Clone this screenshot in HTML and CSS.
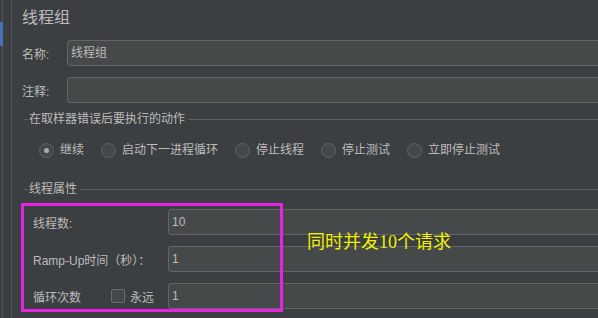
FILE: index.html
```html
<!DOCTYPE html>
<html lang="zh-CN">
<head>
<meta charset="utf-8">
<title>线程组</title>
<link rel="stylesheet" href="styles.css">
</head>
<body>
<div class="app">
  <div class="gutter">
    <div class="strip"><div class="marker"></div></div>
  </div>
  <div class="main">
    <div class="title">线程组</div>
    <div class="form">
      <div class="form-row">
        <label class="label">名称:</label>
        <div class="input">线程组</div>
      </div>
      <div class="form-row">
        <label class="label">注释:</label>
        <div class="input"></div>
      </div>
    </div>

    <div class="section sec-action">
      <div class="sec-head"><span class="sec-line-l"></span><span class="sec-title">在取样器错误后要执行的动作</span><span class="sec-line"></span></div>
      <div class="radios">
        <div class="radio-item"><span class="radio checked"></span><span>继续</span></div>
        <div class="radio-item"><span class="radio"></span><span>启动下一进程循环</span></div>
        <div class="radio-item"><span class="radio"></span><span>停止线程</span></div>
        <div class="radio-item"><span class="radio"></span><span>停止测试</span></div>
        <div class="radio-item"><span class="radio"></span><span>立即停止测试</span></div>
      </div>
    </div>

    <div class="section sec-props">
      <div class="sec-head"><span class="sec-line-l"></span><span class="sec-title">线程属性</span><span class="sec-line"></span></div>
      <div class="props">
        <div class="prop-row">
          <div class="prop-label">线程数:</div>
          <div class="input num">10</div>
        </div>
        <div class="prop-row">
          <div class="prop-label">Ramp-Up时间（秒）：</div>
          <div class="input num">1</div>
        </div>
        <div class="prop-row">
          <div class="prop-label loop"><span class="loop-text">循环次数</span><span class="checkbox"></span><span>永远</span></div>
          <div class="input num">1</div>
        </div>
      </div>
    </div>
  </div>
</div>
<div class="highlight"></div>
<div class="note">同时并发10个请求</div>
</body>
</html>
```
FILE: styles.css
```css
html, body {
  margin: 0;
  padding: 0;
  background: #3c3f41;
  overflow: hidden;
}
body {
  width: 598px;
  height: 318px;
  position: relative;
  font-family: "Liberation Sans", "Noto Sans CJK SC", sans-serif;
  font-size: 12px;
  color: #bbbbbb;
}
.app {
  display: flex;
  height: 318px;
}
.gutter {
  width: 11px;
  flex: none;
  border-right: 1px solid #515456;
}
.strip {
  width: 3px;
  height: 100%;
  box-sizing: border-box;
  padding-top: 22px;
  border-right: 1px solid #515456;
}
.marker {
  width: 3px;
  height: 24px;
  background: #4a6fb3;
}
.main {
  flex: 1;
  min-width: 0;
  padding: 8px 0 0 10px;
}
.title {
  font-size: 16px;
  line-height: 20px;
  height: 20px;
  margin-bottom: 12px;
}
.form {
  display: flex;
  flex-direction: column;
  gap: 11px;
}
.form-row {
  display: flex;
  align-items: center;
  height: 26px;
}
.label {
  width: 45px;
  flex: none;
}
.input {
  flex: 1;
  height: 26px;
  box-sizing: border-box;
  background: #45494a;
  border: 1px solid #646464;
  border-radius: 3px;
  margin-right: -8px;
  padding: 0 3px;
  line-height: 24px;
  color: #bbbbbb;
  overflow: hidden;
}
.section {
  margin-left: 2px;
}
.sec-action {
  margin-top: 10px;
}
.sec-props {
  margin-top: 25px;
}
.sec-head {
  display: flex;
  align-items: center;
  height: 12px;
}
.sec-line-l {
  width: 4px;
  height: 1px;
  background: #5c5e60;
  margin-right: 1px;
}
.sec-title {
  line-height: 12px;
  padding: 0 3px 0 0;
}
.sec-line {
  flex: 1;
  height: 1px;
  background: #5c5e60;
}
.radios {
  display: flex;
  align-items: center;
  gap: 17px;
  margin-top: 18px;
  padding-left: 15px;
  height: 15px;
}
.radio-item {
  display: flex;
  align-items: center;
  gap: 6px;
  line-height: 15px;
}
.radio {
  width: 15px;
  height: 15px;
  box-sizing: border-box;
  border-radius: 50%;
  border: 1px solid #5f6365;
  background: #43494a;
  display: flex;
  align-items: center;
  justify-content: center;
}
.radio.checked::after {
  content: "";
  width: 5px;
  height: 5px;
  border-radius: 50%;
  background: #a9abad;
}
.props {
  margin-top: 14px;
  display: flex;
  flex-direction: column;
  gap: 11px;
}
.prop-row {
  display: flex;
  align-items: center;
  height: 26px;
}
.prop-label {
  width: 135px;
  flex: none;
  padding-left: 9px;
  box-sizing: content-box;
  white-space: nowrap;
}
.loop {
  display: flex;
  align-items: center;
}
.loop-text {
  width: 78px;
}
.checkbox {
  width: 14px;
  height: 14px;
  box-sizing: border-box;
  border: 1px solid #6a6d6f;
  border-radius: 2px;
  background: #43494a;
  margin-right: 5px;
}
.num {
  padding-left: 3px;
}
.highlight {
  position: absolute;
  left: 21px;
  top: 203px;
  width: 262px;
  height: 109px;
  box-sizing: border-box;
  border: 3px solid #e524e5;
}
.note {
  position: absolute;
  left: 307px;
  top: 232px;
  font-family: "Liberation Serif", "Noto Sans CJK SC", serif;
  font-size: 18px;
  line-height: 20px;
  color: #f0f000;
  white-space: nowrap;
}
```
